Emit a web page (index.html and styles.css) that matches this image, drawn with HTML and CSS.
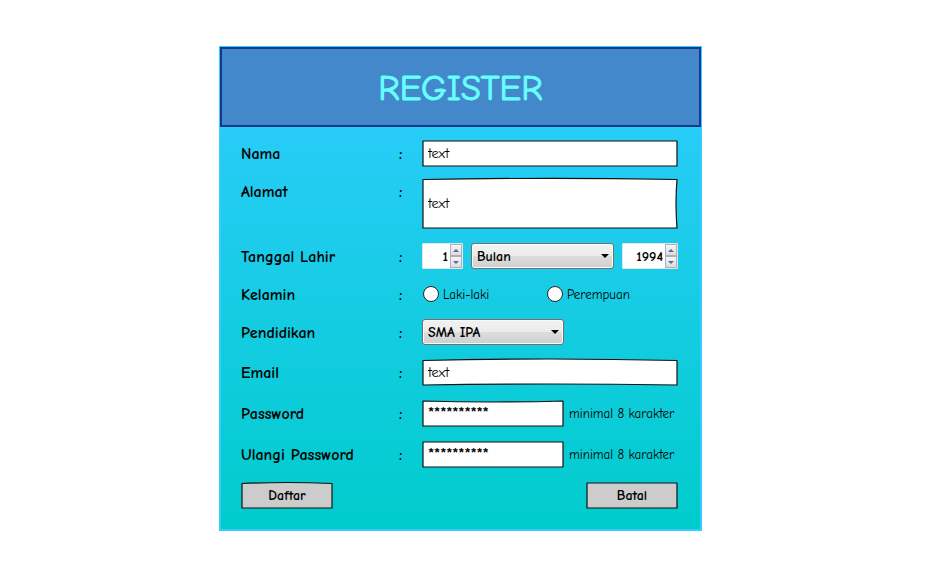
FILE: index.html
```html
<!DOCTYPE html>
<html lang="id">
<head>
<meta charset="utf-8">
<meta name="viewport" content="width=device-width, initial-scale=1">
<title>Register</title>
<link rel="stylesheet" href="styles.css">
</head>
<body>
<main class="panel">
  <header class="panel-header"><h1>REGISTER</h1></header>
  <form class="form">
    <div class="group">
      <div class="row">
        <label class="label" for="nama">Nama</label><span class="colon">:</span>
        <div class="sketch">
          <svg class="outline" viewBox="0 0 256 26" preserveAspectRatio="none"><path d="M1 1H255V26H1Z"/></svg>
          <input class="field" id="nama" type="text" value="text">
        </div>
      </div>
      <div class="row">
        <label class="label" for="alamat">Alamat</label><span class="colon">:</span>
        <div class="sketch tall">
          <svg class="outline" viewBox="0 0 256 51" preserveAspectRatio="none"><path d="M1 1.5Q128-.8 255 1.5Q253 25 255 50H1Z"/></svg>
          <input class="field" id="alamat" type="text" value="text">
        </div>
      </div>
    </div>

    <div class="group">
      <div class="row">
        <label class="label" for="tanggal">Tanggal Lahir</label><span class="colon">:</span>
        <div class="date">
          <div class="spinner day">
            <input id="tanggal" type="number" value="1" min="1" max="31">
            <div class="steps">
              <button type="button" aria-label="Tambah tanggal"><svg viewBox="0 0 10 11"><path d="M2 7L5 4L8 7Z"/></svg></button>
              <button type="button" aria-label="Kurangi tanggal"><svg viewBox="0 0 10 11"><path d="M2 4H8L5 7Z"/></svg></button>
            </div>
          </div>
          <div class="dropdown month">
            <select aria-label="Bulan"><option>Bulan</option></select>
            <svg class="arrow" viewBox="0 0 8 4"><path d="M0 0H8L4 4Z"/></svg>
          </div>
          <div class="spinner year">
            <input type="number" value="1994" aria-label="Tahun">
            <div class="steps">
              <button type="button" aria-label="Tambah tahun"><svg viewBox="0 0 10 11"><path d="M2 7L5 4L8 7Z"/></svg></button>
              <button type="button" aria-label="Kurangi tahun"><svg viewBox="0 0 10 11"><path d="M2 4H8L5 7Z"/></svg></button>
            </div>
          </div>
        </div>
      </div>
      <div class="row">
        <span class="label" id="kelamin">Kelamin</span><span class="colon">:</span>
        <div class="radios" role="radiogroup" aria-labelledby="kelamin">
          <label class="radio"><input type="radio" name="kelamin">Laki-laki</label>
          <label class="radio"><input type="radio" name="kelamin">Perempuan</label>
        </div>
      </div>
      <div class="row">
        <label class="label" for="pendidikan">Pendidikan</label><span class="colon">:</span>
        <div class="dropdown short">
          <select id="pendidikan"><option>SMA IPA</option></select>
          <svg class="arrow" viewBox="0 0 8 4"><path d="M0 0H8L4 4Z"/></svg>
        </div>
      </div>
    </div>

    <div class="group loose">
      <div class="row">
        <label class="label" for="email">Email</label><span class="colon">:</span>
        <div class="sketch">
          <svg class="outline" viewBox="0 0 256 26" preserveAspectRatio="none"><path d="M1 1.5Q128-1.5 255 1.5V26Q128 24 1 26Z"/></svg>
          <input class="field" id="email" type="text" value="text">
        </div>
      </div>
      <div class="row">
        <label class="label" for="password">Password</label><span class="colon">:</span>
        <div class="with-hint">
          <div class="sketch short">
            <svg class="outline" viewBox="0 0 142 26" preserveAspectRatio="none"><path d="M1 1Q70 3 141 1V26H1Z"/></svg>
            <input class="field secret" id="password" type="text" autocomplete="off" value="**********">
          </div>
          <span class="hint">minimal 8 karakter</span>
        </div>
      </div>
      <div class="row">
        <label class="label" for="ulangi">Ulangi Password</label><span class="colon">:</span>
        <div class="with-hint">
          <div class="sketch short">
            <svg class="outline" viewBox="0 0 142 26" preserveAspectRatio="none"><path d="M1 1H141V26H1Z"/></svg>
            <input class="field secret" id="ulangi" type="text" autocomplete="off" value="**********">
          </div>
          <span class="hint">minimal 8 karakter</span>
        </div>
      </div>
      <div class="actions">
        <button class="sketch action" type="submit">
          <svg class="outline" viewBox="0 0 92 26" preserveAspectRatio="none"><path d="M1 1.5Q45-.5 91 1.5V26H1Z"/></svg>
          <span>Daftar</span>
        </button>
        <button class="sketch action" type="button">
          <svg class="outline" viewBox="0 0 92 26" preserveAspectRatio="none"><path d="M1 1H91V26H1Z"/></svg>
          <span>Batal</span>
        </button>
      </div>
    </div>
  </form>
</main>
</body>
</html>
```
FILE: styles.css
```css
* {
  box-sizing: border-box;
}

body {
  margin: 0;
  padding: 46px 24px 46px 219px;
  background: #fff;
  color: #000;
  font-family: "Comic Sans MS", "Comic Neue", "Noto Sans", sans-serif;
  font-size: 13px;
}

input,
select,
button {
  margin: 0;
  font: inherit;
  color: inherit;
}

.panel {
  max-width: 483px;
  border: 2px solid #33ccff;
  background: linear-gradient(#2fccff, #00cccc);
}

.panel-header {
  margin: -1px -1px 0;
  padding: 18px 16px 14px;
  border: 2px solid #16388c;
  background: #4488cc;
  text-align: center;
}

h1 {
  margin: 0;
  color: #66ffff;
  font-size: 36px;
  font-weight: 400;
  line-height: 44px;
  -webkit-text-stroke: 1px #66ffff;
}

.form {
  display: flex;
  flex-direction: column;
  gap: 14px;
  padding: 13px 22px 21px 20px;
}

.group {
  display: flex;
  flex-direction: column;
  gap: 12px;
}

.loose {
  gap: 15px;
}

.row {
  display: grid;
  grid-template-columns: 158px 23px 1fr;
}

.label,
.colon {
  padding-top: 2px;
  font-size: 16px;
  font-weight: 700;
  line-height: 24px;
}

.sketch {
  position: relative;
  height: 26px;
}

.tall {
  height: 51px;
}

.short {
  width: 142px;
}

.outline {
  position: absolute;
  inset: 0;
  width: 100%;
  height: 100%;
  overflow: visible;
  fill: #fff;
  stroke: #111;
  stroke-width: 1.2;
  stroke-linejoin: round;
}

.field {
  position: relative;
  display: block;
  width: 100%;
  height: 100%;
  padding: 0 6px;
  border: 0;
  background: transparent;
  font-size: 14px;
  font-weight: 400;
}

.secret {
  font-size: 16px;
  font-weight: 700;
}

.date {
  display: flex;
  gap: 8px;
}

.spinner {
  display: flex;
  height: 26px;
  border: 1px solid #dde8ee;
  border-radius: 1px;
  background: #fff;
}

.day {
  width: 41px;
}

.year {
  width: 56px;
}

.spinner input {
  flex: 1;
  min-width: 0;
  padding: 0 2px 0 0;
  border: 0;
  background: transparent;
  font-size: 14px;
  font-weight: 700;
  text-align: right;
  appearance: textfield;
}

.spinner input::-webkit-inner-spin-button {
  appearance: none;
}

.steps {
  display: flex;
  flex-direction: column;
  width: 12px;
}

.steps button {
  flex: 1;
  display: flex;
  align-items: center;
  justify-content: center;
  min-height: 0;
  padding: 0;
  border: 1px solid #b0b0b4;
  background: linear-gradient(#f6f6f6, #dcdcdc);
}

.steps svg {
  width: 10px;
  height: 11px;
  fill: #5468b0;
}

.dropdown {
  position: relative;
  height: 26px;
}

.month {
  flex: 1;
}

.dropdown select {
  width: 100%;
  height: 100%;
  padding: 0 5px;
  border: 1px solid #707070;
  border-radius: 3px;
  background: linear-gradient(#f2f2f2, #ebebeb 50%, #dddddd 50%, #cfcfcf);
  box-shadow: inset 0 0 0 1px #fafafa;
  font-size: 14px;
  font-weight: 700;
  appearance: none;
}

.arrow {
  position: absolute;
  top: 11px;
  right: 5px;
  width: 8px;
  height: 4px;
  pointer-events: none;
}

.radios {
  display: grid;
  grid-template-columns: 124px 1fr;
  height: 26px;
}

.radio {
  display: flex;
  align-items: center;
  gap: 4px;
}

.radio input {
  width: 16px;
  height: 16px;
  margin-left: 1px;
  border: 1px solid #222;
  border-radius: 50%;
  background: #fff;
  appearance: none;
}

.radio input:checked {
  background: radial-gradient(#222 35%, #fff 40%);
}

.with-hint {
  display: flex;
  align-items: center;
  gap: 5px;
}

.hint {
  white-space: nowrap;
}

.actions {
  display: flex;
  justify-content: space-between;
}

.action {
  width: 92px;
  padding: 0;
  border: 0;
  background: transparent;
  font-size: 14px;
  font-weight: 700;
}

.action .outline {
  fill: #cccccc;
}

.action span {
  position: relative;
}
```
